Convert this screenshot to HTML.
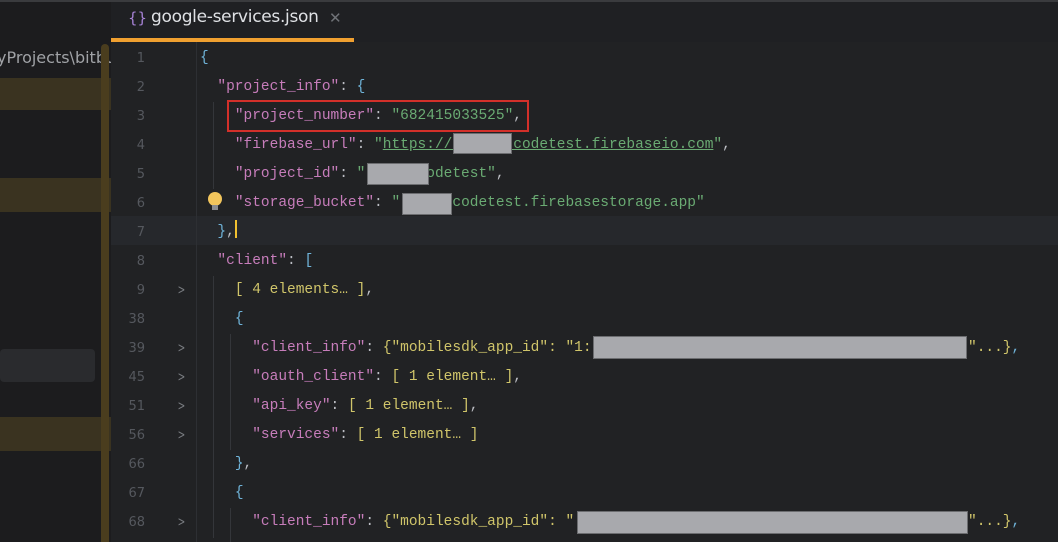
<!DOCTYPE html>
<html><head><meta charset="utf-8"><style>
html,body{margin:0;padding:0;width:1058px;height:542px;overflow:hidden;background:#212224;}
body{position:relative;font-family:"Liberation Mono",monospace;}
.abs{position:absolute;}
#side{left:0;top:0;width:111px;height:542px;background:#1c1c1e;}
#topline{left:0;top:0;width:1058px;height:2px;background:#3a3b3e;}
.row{position:absolute;left:0;white-space:pre;font-size:14.5px;line-height:29px;height:29px;}
.ln{position:absolute;width:40px;text-align:right;left:105px;color:#55585e;font-family:"DejaVu Sans",sans-serif;font-size:13px;}
.fold{position:absolute;left:176px;color:#7a7d82;font-family:"DejaVu Sans",sans-serif;font-size:13px;transform:scaleX(0.7);}
.code{position:absolute;left:200px;color:#bcbec4;}
.k{color:#c77dbb}.s{color:#6aab73}.b{color:#6fb3d8}.y{color:#d0c56a}
.box{position:absolute;background:#a8a9ad;border:1px solid #6c6d70;}
</style></head><body>
<div id="side" class="abs"></div>
<div class="abs" style="left:0;top:44px;width:111px;height:28px;font-family:'DejaVu Sans',sans-serif;font-size:16px;line-height:28px;color:#a0a2a6;white-space:nowrap;overflow:hidden;"><span style="margin-left:-3px">yProjects\bitbucket</span></div>
<div class="abs" style="left:0;top:78px;width:111px;height:32px;background:#3a3320;"></div>
<div class="abs" style="left:0;top:178px;width:111px;height:34px;background:#3a3320;"></div>
<div class="abs" style="left:0;top:417px;width:111px;height:34px;background:#3a3320;"></div>
<div class="abs" style="left:0;top:349px;width:95px;height:33px;background:#2a2b2e;border-radius:4px;"></div>
<div class="abs" style="left:101px;top:44px;width:8px;height:498px;background:#4a3d1e;border-radius:4px 4px 0 0;"></div>
<div id="topline" class="abs"></div>
<div class="abs" style="left:111px;top:2px;width:947px;height:40px;background:#1f2023;"></div>
<div class="abs" style="left:128px;top:6px;font-family:'DejaVu Sans',sans-serif;font-size:15px;line-height:24px;color:#a782d6;">{}</div>
<div class="abs" style="left:151px;top:4px;font-family:'DejaVu Sans',sans-serif;font-size:17px;line-height:26px;color:#dfe1e5;letter-spacing:-0.3px;">google-services.json</div>
<div class="abs" style="left:329px;top:5px;font-family:'DejaVu Sans',sans-serif;font-size:15px;line-height:26px;color:#6f7277;">✕</div>
<div class="abs" style="left:111px;top:38px;width:243px;height:4px;background:#f0a030;"></div>
<div class="abs" style="left:111px;top:216px;width:947px;height:29px;background:#26282c;"></div>
<div class="abs" style="left:196px;top:42px;width:1px;height:500px;background:#2d2f33;"></div>

<div class="row" style="top:44px"><span class="ln">1</span><span class="code"><span class="b">{</span></span></div>
<div class="row" style="top:73px"><span class="ln">2</span><span class="code">  <span class="k">"project_info"</span>: <span class="b">{</span></span></div>
<div class="row" style="top:102px"><span class="ln">3</span><span class="code">    <span class="k">"project_number"</span>: <span class="s">"682415033525"</span>,</span></div>
<div class="row" style="top:131px"><span class="ln">4</span><span class="code">    <span class="k">"firebase_url"</span>: <span class="s">"<u>https://       codetest.firebaseio.com</u>"</span>,</span></div>
<div class="row" style="top:160px"><span class="ln">5</span><span class="code">    <span class="k">"project_id"</span>: <span class="s">"       odetest"</span>,</span></div>
<div class="row" style="top:189px"><span class="ln">6</span><span class="code">    <span class="k">"storage_bucket"</span>: <span class="s">"      codetest.firebasestorage.app"</span></span></div>
<div class="row" style="top:218px"><span class="ln">7</span><span class="code">  <span class="b">}</span>,<span style="display:inline-block;width:2px;height:18px;background:#f0c030;vertical-align:-3px"></span></span></div>
<div class="row" style="top:247px"><span class="ln">8</span><span class="code">  <span class="k">"client"</span>: <span class="b">[</span></span></div>
<div class="row" style="top:276px"><span class="ln">9</span><span class="fold">&gt;</span><span class="code">    <span class="y">[ 4 elements… ]</span>,</span></div>
<div class="row" style="top:305px"><span class="ln">38</span><span class="code">    <span class="b">{</span></span></div>
<div class="row" style="top:334px"><span class="ln">39</span><span class="fold">&gt;</span><span class="code">      <span class="k">"client_info"</span>: <span class="y">{"mobilesdk_app_id": "1:</span></span></div>
<div class="row" style="top:363px"><span class="ln">45</span><span class="fold">&gt;</span><span class="code">      <span class="k">"oauth_client"</span>: <span class="y">[ 1 element… ]</span>,</span></div>
<div class="row" style="top:392px"><span class="ln">51</span><span class="fold">&gt;</span><span class="code">      <span class="k">"api_key"</span>: <span class="y">[ 1 element… ]</span>,</span></div>
<div class="row" style="top:421px"><span class="ln">56</span><span class="fold">&gt;</span><span class="code">      <span class="k">"services"</span>: <span class="y">[ 1 element… ]</span></span></div>
<div class="row" style="top:450px"><span class="ln">66</span><span class="code">    <span class="b">}</span>,</span></div>
<div class="row" style="top:479px"><span class="ln">67</span><span class="code">    <span class="b">{</span></span></div>
<div class="row" style="top:508px"><span class="ln">68</span><span class="fold">&gt;</span><span class="code">      <span class="k">"client_info"</span>: <span class="y">{"mobilesdk_app_id": "</span></span></div>

<div class="abs y" style="left:968px;top:334px;font-size:14.5px;line-height:29px;white-space:pre;">"...}<span class="b">,</span></div>
<div class="abs y" style="left:968px;top:508px;font-size:14.5px;line-height:29px;white-space:pre;">"...}<span class="b">,</span></div>

<div class="box" style="left:453px;top:133px;width:57px;height:19px;"></div>
<div class="box" style="left:367px;top:163px;width:60px;height:20px;"></div>
<div class="box" style="left:402px;top:193px;width:48px;height:20px;"></div>
<div class="box" style="left:593px;top:336px;width:372px;height:21px;"></div>
<div class="box" style="left:577px;top:511px;width:389px;height:21px;"></div>

<div class="abs" style="left:227px;top:100px;width:298px;height:28px;border:2px solid #d3302a;"></div>
<div class="abs" style="left:208px;top:192px;width:14px;height:14px;border-radius:50%;background:#f2c55c;"></div>
<div class="abs" style="left:212px;top:205px;width:6px;height:5px;background:#8a8c90;"></div>
<div class="abs" style="left:213px;top:102px;width:1px;height:87px;background:#34363a;"></div>
<div class="abs" style="left:213px;top:276px;width:1px;height:262px;background:#34363a;"></div>
<div class="abs" style="left:230px;top:334px;width:1px;height:116px;background:#34363a;"></div>
<div class="abs" style="left:230px;top:508px;width:1px;height:34px;background:#34363a;"></div>
</body></html>
